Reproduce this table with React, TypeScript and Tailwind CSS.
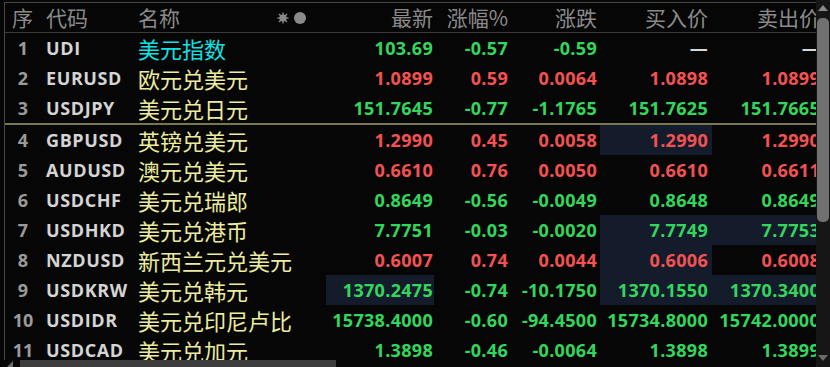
import React from "react";

type Tone = "g" | "r" | "w";

type Quote = {
  no: number;
  code: string;
  name: string;
  cyan?: boolean;
  tone: Tone;
  last: string;
  pct: string;
  chg: string;
  bid: string;
  ask: string;
  hlLast?: boolean;
  hlBid?: boolean;
  hlAsk?: boolean;
  split?: boolean;
};

const quotes: Quote[] = [
  { no: 1, code: "UDI", name: "美元指数", cyan: true, tone: "g", last: "103.69", pct: "-0.57", chg: "-0.59", bid: "—", ask: "—" },
  { no: 2, code: "EURUSD", name: "欧元兑美元", tone: "r", last: "1.0899", pct: "0.59", chg: "0.0064", bid: "1.0898", ask: "1.0899" },
  { no: 3, code: "USDJPY", name: "美元兑日元", tone: "g", last: "151.7645", pct: "-0.77", chg: "-1.1765", bid: "151.7625", ask: "151.7665", split: true },
  { no: 4, code: "GBPUSD", name: "英镑兑美元", tone: "r", last: "1.2990", pct: "0.45", chg: "0.0058", bid: "1.2990", ask: "1.2990", hlBid: true },
  { no: 5, code: "AUDUSD", name: "澳元兑美元", tone: "r", last: "0.6610", pct: "0.76", chg: "0.0050", bid: "0.6610", ask: "0.6611" },
  { no: 6, code: "USDCHF", name: "美元兑瑞郎", tone: "g", last: "0.8649", pct: "-0.56", chg: "-0.0049", bid: "0.8648", ask: "0.8649" },
  { no: 7, code: "USDHKD", name: "美元兑港币", tone: "g", last: "7.7751", pct: "-0.03", chg: "-0.0020", bid: "7.7749", ask: "7.7753", hlBid: true, hlAsk: true },
  { no: 8, code: "NZDUSD", name: "新西兰元兑美元", tone: "r", last: "0.6007", pct: "0.74", chg: "0.0044", bid: "0.6006", ask: "0.6008", hlBid: true },
  { no: 9, code: "USDKRW", name: "美元兑韩元", tone: "g", last: "1370.2475", pct: "-0.74", chg: "-10.1750", bid: "1370.1550", ask: "1370.3400", hlLast: true, hlBid: true, hlAsk: true },
  { no: 10, code: "USDIDR", name: "美元兑印尼卢比", tone: "g", last: "15738.4000", pct: "-0.60", chg: "-94.4500", bid: "15734.8000", ask: "15742.0000" },
  { no: 11, code: "USDCAD", name: "美元兑加元", tone: "g", last: "1.3898", pct: "-0.46", chg: "-0.0064", bid: "1.3898", ask: "1.3899" },
];

const toneClass: Record<Tone, string> = {
  g: "text-[#33d65c]",
  r: "text-[#f45252]",
  w: "text-[#d8d8d8]",
};

const num = "font-['Open_Sans',sans-serif] font-bold text-[18px] tracking-[0.3px]";
const cjk = "font-['Noto_Sans_CJK_SC','Noto_Sans',sans-serif]";

function Cell({ w, pr, hl, children, className = "" }: { w: string; pr: string; hl?: boolean; children: React.ReactNode; className?: string }) {
  return (
    <div className={`${w} ${pr} shrink-0 h-full flex items-center justify-end ${hl ? "bg-[#141b2b]" : ""} ${className}`}>
      {children}
    </div>
  );
}

function Row({ q }: { q: Quote }) {
  const tc = toneClass[q.tone];
  const dash = q.bid === "—" ? toneClass.w : tc;
  return (
    <div className={`flex h-[30px] shrink-0 ${q.split ? "border-b-2 border-[#77774f] h-[32px]" : ""}`}>
      <div className={`w-[36px] shrink-0 flex items-center justify-center text-[#9a9a9a] ${num} tracking-normal`}>{q.no}</div>
      <div className="w-[97px] shrink-0 pl-[5px] flex items-center text-[#d4d4d4] font-['Open_Sans',sans-serif] font-bold text-[18px] tracking-[0.6px]">
        {q.code}
      </div>
      <div className={`w-[188px] shrink-0 flex items-center text-[22px] leading-none ${cjk} ${q.cyan ? "text-[#0fe2e4]" : "text-[#ecec9e]"}`}>
        {q.name}
      </div>
      <Cell w="w-[108px]" pr="pr-[1px]" hl={q.hlLast} className={`${num} ${tc}`}>{q.last}</Cell>
      <Cell w="w-[76px]" pr="pr-[2px]" className={`${num} ${tc}`}>{q.pct}</Cell>
      <Cell w="w-[90px]" pr="pr-[3px]" className={`${num} ${tc}`}>{q.chg}</Cell>
      <Cell w="w-[112px]" pr="pr-[4px]" hl={q.hlBid} className={`${num} ${dash}`}>{q.bid}</Cell>
      <Cell w="w-[112px]" pr="pr-[4px]" hl={q.hlAsk} className={`${num} ${dash}`}>{q.ask}</Cell>
    </div>
  );
}

function HeaderRow() {
  const h = `text-[21px] text-[#8a8a8a] ${cjk}`;
  return (
    <div className="flex h-[30px] shrink-0 border-b border-[#3a3a3a]">
      <div className={`w-[36px] shrink-0 pl-[7px] flex items-center ${h}`}>序</div>
      <div className={`w-[97px] shrink-0 pl-[5px] flex items-center ${h}`}>代码</div>
      <div className={`w-[188px] shrink-0 flex items-center pr-[20px] ${h}`}>
        名称
        <div className="ml-auto flex items-center gap-[5px]">
          <svg width="12" height="12" viewBox="0 0 12 12">
            <g stroke="#8a8a8a" strokeWidth="1.4">
              <line x1="6" y1="0.5" x2="6" y2="11.5" />
              <line x1="0.5" y1="6" x2="11.5" y2="6" />
              <line x1="2" y1="2" x2="10" y2="10" />
              <line x1="10" y1="2" x2="2" y2="10" />
            </g>
            <circle cx="6" cy="6" r="3.6" fill="#8a8a8a" />
          </svg>
          <div className="w-[12px] h-[12px] rounded-full bg-[#8a8a8a]" />
        </div>
      </div>
      <Cell w="w-[108px]" pr="pr-[1px]" className={h}>最新</Cell>
      <Cell w="w-[76px]" pr="pr-[2px]" className={h}>涨幅%</Cell>
      <Cell w="w-[90px]" pr="pr-[3px]" className={h}>涨跌</Cell>
      <Cell w="w-[112px]" pr="pr-[4px]" className={h}>买入价</Cell>
      <Cell w="w-[112px]" pr="pr-[4px]" className={h}>卖出价</Cell>
    </div>
  );
}

export default function App() {
  return (
    <div className="w-[830px] h-[367px] flex bg-[#060606] overflow-hidden">
      {/* table + horizontal scroll */}
      <div className="flex-1 min-w-0 flex flex-col pt-[2px] pl-[4px]">
        <div className="flex-1 min-h-0 border-l border-t border-[#474747] overflow-hidden">
          <div className="w-[819px] flex flex-col">
            <HeaderRow />
            {quotes.map((q) => (
              <Row key={q.no} q={q} />
            ))}
          </div>
        </div>
        <div className="h-[7px] shrink-0 flex items-center">
          <svg width="16" height="7" viewBox="0 0 16 7" className="shrink-0">
            <polygon points="9,1 9,7 3,7" fill="#6a6a6a" />
          </svg>
          <div className="w-[316px] h-full bg-[#3d3d3d]" />
        </div>
      </div>

      {/* vertical scrollbar */}
      <div className="w-[14px] shrink-0 bg-[#161616] flex flex-col items-center">
        <svg width="12" height="12" viewBox="0 0 12 12" className="mt-[2px] shrink-0">
          <polygon points="6,3 11,9 1,9" fill="#8a8a8a" />
        </svg>
        <div className="mt-[4px] w-[12px] h-[204px] rounded-[5px] bg-[#707070]" />
        <div className="flex-1" />
        <svg width="12" height="12" viewBox="0 0 12 12" className="mb-[3px] shrink-0">
          <polygon points="1,3 11,3 6,9" fill="#6a6a6a" />
        </svg>
      </div>
    </div>
  );
}
